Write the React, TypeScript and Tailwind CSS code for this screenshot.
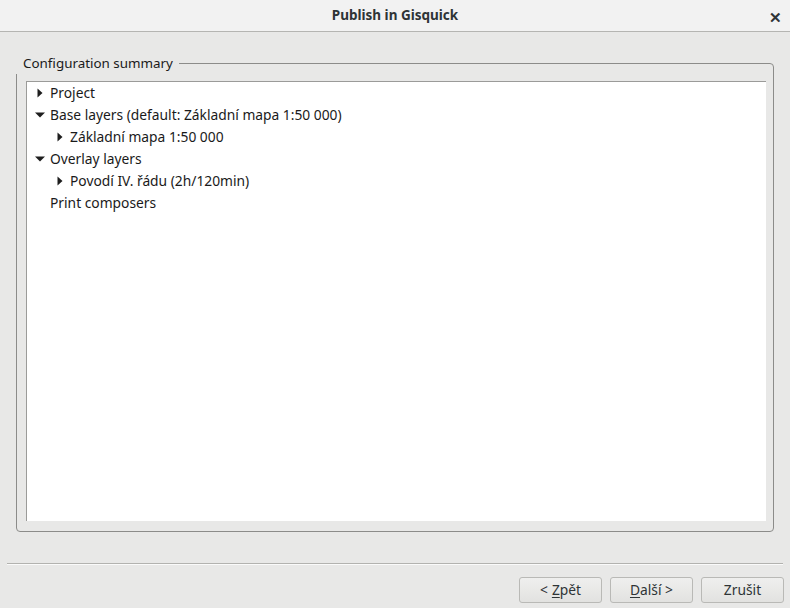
import React from 'react'

type Row = { label: string; level: number; arrow: 'right' | 'down' | null }

const ROWS: Row[] = [
  { label: 'Project', level: 0, arrow: 'right' },
  { label: 'Base layers (default: Základní mapa 1:50 000)', level: 0, arrow: 'down' },
  { label: 'Základní mapa 1:50 000', level: 1, arrow: 'right' },
  { label: 'Overlay layers', level: 0, arrow: 'down' },
  { label: 'Povodí IV. řádu (2h/120min)', level: 1, arrow: 'right' },
  { label: 'Print composers', level: 0, arrow: null },
]

function Arrow({ dir }: { dir: 'right' | 'down' }) {
  if (dir === 'right') {
    return (
      <svg width="6" height="10" viewBox="0 0 6 10" className="shrink-0">
        <path d="M0.5 0.5 L5.5 5 L0.5 9.5 Z" fill="#1e1e1e" />
      </svg>
    )
  }
  return (
    <svg width="10" height="6" viewBox="0 0 10 6" className="shrink-0">
      <path d="M0 0.5 L10 0.5 L5 5.5 Z" fill="#1e1e1e" />
    </svg>
  )
}

function Button({ children }: { children: React.ReactNode }) {
  return (
    <button className="flex h-[26px] w-[83px] items-center justify-center rounded-[3px] border border-[#b9b9b6] bg-gradient-to-b from-[#efefee] to-[#e2e2e0] text-[13.8px] text-[#2e3436]">
      {children}
    </button>
  )
}

export default function App() {
  return (
    <div
      className="flex h-[608px] w-[790px] flex-col bg-[#e8e8e7] text-[#1a1a1a]"
      style={{ fontFamily: '"Noto Sans", "Open Sans", sans-serif' }}
    >
      {/* title bar */}
      <div className="relative flex h-[32px] shrink-0 items-center justify-center border-b border-[#b5b5b2] bg-[#f2f2f2]">
        <span className="text-[13.5px] font-bold text-[#2e3436]">Publish in Gisquick</span>
        <span className="absolute right-[8px] top-[6px] text-[15px] font-bold text-[#2e3436]">✕</span>
      </div>

      {/* content */}
      <div className="flex flex-1 flex-col px-[16px] pt-[31px]">
        <div className="relative h-[469px] rounded-[4px] border border-[#8c8c8a] px-[9px] pb-[10px] pt-[17px]">
          <span className="absolute left-[-2px] top-[-11px] h-[21px] bg-[#e8e8e7] pl-[8px] pr-[6px] text-[13.4px] leading-[20px] text-[#1a1a1a]">
            Configuration summary
          </span>
          <div className="h-full w-[740px] border-l border-t border-[#9b9b99] bg-white">
            {ROWS.map((row) => (
              <div
                key={row.label}
                className="flex h-[22px] items-center text-[13.8px]"
                style={{ paddingLeft: row.level === 0 ? 8 : 28 }}
              >
                <div className="flex w-[15px] items-center justify-start">
                  {row.arrow === 'right' && <span className="ml-[2px] flex"><Arrow dir="right" /></span>}
                  {row.arrow === 'down' && <Arrow dir="down" />}
                </div>
                <span>{row.label}</span>
              </div>
            ))}
          </div>
        </div>
      </div>

      {/* separator + buttons */}
      <div className="mx-[7px] border-t border-[#b2b2af] shadow-[0_1px_0_#fafafa]" />
      <div className="flex h-[44px] items-start justify-end gap-[8px] pr-[6px] pt-[13px]">
        <Button>
          &lt; <span className="ml-[4px] underline underline-offset-2">Z</span>pět
        </Button>
        <Button>
          <span className="underline underline-offset-2">D</span>alší &gt;
        </Button>
        <Button>Zrušit</Button>
      </div>
    </div>
  )
}
